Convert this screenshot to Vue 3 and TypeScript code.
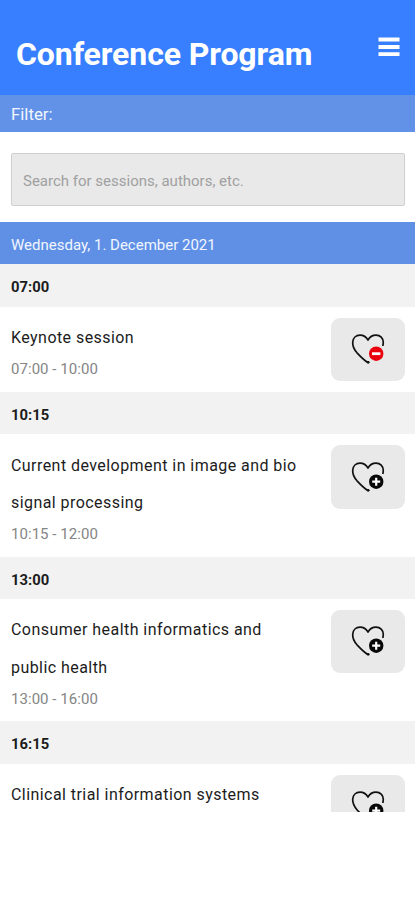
<script setup lang="ts">
import { ref } from 'vue'

interface Session {
  start: string
  lines: string[]
  time: string
  saved: boolean
}

const query = ref('')
const sessions = ref<Session[]>([
  { start: '07:00', lines: ['Keynote session'], time: '07:00 - 10:00', saved: true },
  { start: '10:15', lines: ['Current development in image and bio', 'signal processing'], time: '10:15 - 12:00', saved: false },
  { start: '13:00', lines: ['Consumer health informatics and', 'public health'], time: '13:00 - 16:00', saved: false },
  { start: '16:15', lines: ['Clinical trial information systems'], time: '', saved: false },
])
</script>

<template>
  <main class="screen">
    <header class="header">
      <h1 class="heading">Conference Program</h1>
      <button class="menu" aria-label="Menu">
        <svg width="22" height="20" viewBox="0 0 22 20">
          <path d="M.5 2.5h21M.5 10h21M.5 17.2h21" stroke="#fff" stroke-width="3.8" />
        </svg>
      </button>
    </header>
    <div class="filter">Filter:</div>
    <div class="search">
      <input v-model="query" class="field" type="text" placeholder="Search for sessions, authors, etc." />
    </div>
    <div class="date">Wednesday, 1. December 2021</div>
    <section v-for="s in sessions" :key="s.start" class="slot">
      <div class="start">{{ s.start }}</div>
      <div class="row">
        <div class="info">
          <div v-for="line in s.lines" :key="line" class="title">{{ line }}</div>
          <div v-if="s.time" class="time">{{ s.time }}</div>
        </div>
        <button class="fav" :aria-label="s.saved ? 'Remove favourite' : 'Add favourite'" @click="s.saved = !s.saved">
          <svg width="34" height="32" viewBox="0 0 34 32">
            <path
              d="M17 29.6 C13 27.2 9.5 23.5 6 19.8 C3 16.3 1.5 13 1.7 9.2 C2 4.9 5 2.1 9 2.1 C12.4 2.1 15.2 3.9 17 7.1 C18.7 3.9 21.4 2.1 25 2.1 C29.2 2.1 32.3 5.2 32.3 9.5 L31.9 13"
              fill="none"
              stroke="#111"
              stroke-width="1.7"
              stroke-linejoin="round"
            />
            <circle cx="17.2" cy="29.3" r="1.4" fill="#111" />
            <circle cx="25.2" cy="20.7" r="7.2" :fill="s.saved ? '#e8000c' : '#080808'" />
            <path v-if="s.saved" d="M21 20.7h8.4" stroke="#fff" stroke-width="2.8" />
            <path v-else d="M21.2 20.7h8M25.2 16.7v8" stroke="#fff" stroke-width="2.2" />
          </svg>
        </button>
      </div>
    </section>
  </main>
</template>

<style>
body {
  background: #fff;
}
</style>

<style scoped>
.screen {
  width: 415px;
  height: 812px;
  overflow: hidden;
  font-family: Roboto, sans-serif;
  color: #1c1c1c;
}
.header {
  display: flex;
  justify-content: space-between;
  box-sizing: border-box;
  height: 95px;
  padding: 35px 15px 0 16px;
  background: #387fff;
}
.heading {
  margin: 0;
  font-size: 32px;
  line-height: 38px;
  font-weight: 700;
  letter-spacing: -0.1px;
  color: #fff;
}
.menu {
  width: 22px;
  height: 20px;
  margin-top: 2px;
  padding: 0;
  border: 0;
  background: none;
}
svg {
  display: block;
}
.filter {
  height: 37px;
  padding-left: 11px;
  background: #6292e7;
  color: #f2f6fe;
  font-size: 16.8px;
  line-height: 39px;
}
.search {
  box-sizing: border-box;
  height: 90px;
  padding: 21px 10px 0 11px;
}
.field {
  display: block;
  box-sizing: border-box;
  width: 100%;
  height: 53px;
  padding: 2px 11px 0;
  border: 1px solid #cfcfcf;
  border-radius: 2px;
  outline: 0;
  background: #e9e9e9;
  font-family: inherit;
  font-size: 15px;
}
.field::placeholder {
  color: #a0a0a0;
}
.date {
  height: 42.4px;
  padding-left: 11px;
  background: #5f90e6;
  color: #f2f6fe;
  font-size: 15px;
  line-height: 46px;
}
.start {
  height: 42.4px;
  padding-left: 11px;
  background: #f2f2f2;
  font-size: 14.8px;
  line-height: 46px;
  font-weight: 700;
}
.row {
  display: flex;
  justify-content: space-between;
  padding: 10.9px 10px 9.3px 11px;
}
.info {
  padding-top: 1.4px;
}
.title {
  font-size: 16px;
  line-height: 37.2px;
  letter-spacing: 0.44px;
  white-space: nowrap;
}
.time {
  height: 26.4px;
  color: #858585;
  font-size: 15px;
  line-height: 27px;
  letter-spacing: 0.05px;
}
.fav {
  display: flex;
  flex: none;
  align-items: flex-start;
  justify-content: center;
  width: 74px;
  height: 63.4px;
  padding: 15.4px 0 0;
  border: 0;
  border-radius: 9px;
  background: #e9e9e9;
}
</style>
